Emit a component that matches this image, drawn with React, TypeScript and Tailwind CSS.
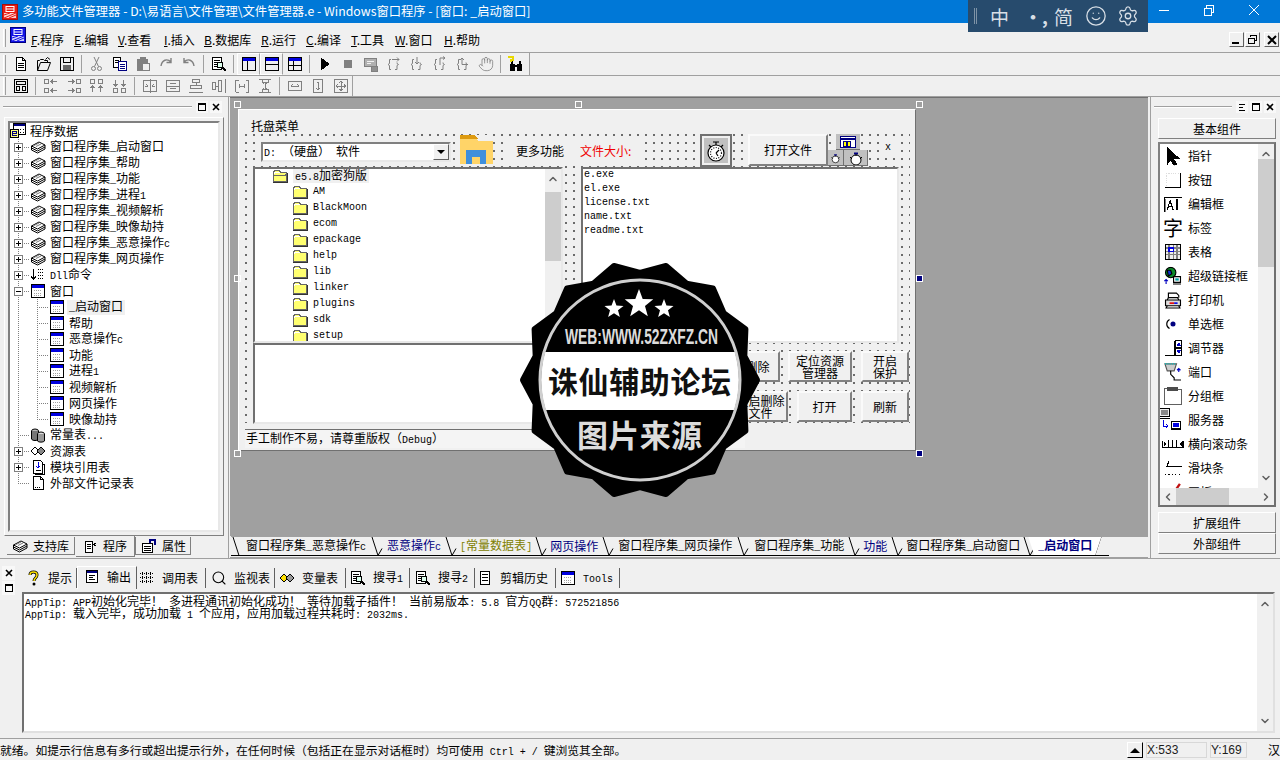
import { ChevronDown, ChevronLeft, ChevronRight, ChevronUp, Hand, Search, Settings, Smile } from "lucide-react";
import type { ReactNode } from "react";

const GRAY = "#808080";
const MONO = "font-['Liberation_Mono',monospace] text-[10px]";

// SimSun style text: latin runs are half width
const T = ({ s }: { s: string }) => (
  <span className="whitespace-pre">
    {s.split(/([\x20-\x7e]+)/).map((part, i) =>
      i % 2 ? (
        <span key={i} className={MONO}>
          {part}
        </span>
      ) : (
        part
      )
    )}
  </span>
);

const Ico = ({ children, gray, w = 16, h = 16, crisp = true }: { children: ReactNode; gray?: boolean; w?: number; h?: number; crisp?: boolean }) => (
  <svg
    width={w}
    height={h}
    viewBox={`0 0 ${w} ${h}`}
    fill="none"
    stroke={gray ? GRAY : "#000"}
    shapeRendering={crisp ? "crispEdges" : "auto"}
    className="shrink-0"
  >
    {children}
  </svg>
);

const WinIcon = ({ dots = true, panes = 0 }: { dots?: boolean; panes?: number }) => (
  <Ico>
    <rect x="1.5" y="1.5" width="13" height="13" fill={panes ? "#f0f0f0" : "#fff"} />
    <rect x="2" y="2" width="12" height="3" fill="#0000e0" stroke="none" />
    {dots && <path d="M4 7.5h8M4 10.5h8M4 12.5h8" stroke="#a0a0a0" strokeDasharray="1 1" />}
    {panes === 1 && <path d="M6.5 5v9" />}
    {panes === 2 && <path d="M2 8.5h12" />}
    {panes === 3 && <path d="M6.5 5v9M2 9.5h12" />}
  </Ico>
);

const StackIcon = () => (
  <Ico crisp={false} h={16}>
    <path d="M1.5 7L9 3l6 3-7.5 4z" fill="#fff" />
    <path d="M4 6.5l5-2.5M6 7.5l5-2.5" stroke="#777" />
    <path d="M1.5 7v2l6 3 7.5-4V6M1.5 9v2l6 3 7.5-4V8" />
  </Ico>
);

const Folder = ({ open }: { open?: boolean }) => (
  <svg width="16" height="14" viewBox="0 0 16 14" className="shrink-0" shapeRendering="crispEdges">
    <path d="M1.5 3.5l1-2h5l1 2h6v9h-13z" fill="#ffff70" stroke="#666" />
    <path d="M2 3h6M2 4h1M14 13h1" stroke="#fff" />
    <path d="M1 13h15M15 4v9" stroke="#333" />
    {open && <path d="M1.5 6.5h11l2-1" stroke="#666" fill="none" />}
  </svg>
);

const BraceIcon = ({ dir }: { dir: number }) => (
  <Ico gray crisp={false}>
    <path d="M5 3.5H3.5v4l-1.5 1 1.5 1v4H5M11 6.5v1l1.5 1-1.5 1v4H9" />
    {dir === 0 && <path d="M6 3.5h7M11 1.5l2 2-2 2" />}
    {dir === 1 && <path d="M8 1v7M6 6l2 2 2-2" />}
    {dir === 2 && <path d="M8 9V2H13M11 .5l2 1.5-2 1.5" />}
    {dir === 3 && <path d="M13 8.5H7V2M9 4L7 2 5 4" />}
  </Ico>
);

const Binoculars = () => (
  <Ico>
    <path d="M2.5 8h4v6h-4zM9.5 8h4v6h-4z" fill="#000" />
    <path d="M6 10h4M4 5v3M12 5v3" strokeWidth="2" />
    <path d="M1 2V1h4v3H3v2" stroke="#e8d800" strokeWidth="1.5" />
  </Ico>
);

const FindDoc = () => (
  <Ico>
    <path d="M1.5 1.5h9v12h-9z" fill="#fff" />
    <path d="M3 4.5h6M3 6.5h4M3 8.5h4M3 10.5h4" />
    <rect x="6.5" y="6.5" width="5" height="5" fill="#dfe" />
    <path d="M11 11l4 4" strokeWidth="2" />
  </Ico>
);

const toolbarA: ReactNode[] = [
  <Ico key="new"><path d="M3.5 1.5h6l3 3v10h-9zM9.5 1.5v3h3M5 7.5h6M5 9.5h6M5 11.5h6" fill="#fff" /></Ico>,
  <Ico key="open" crisp={false}><path d="M1.5 14.5v-10h2l1-1h3l1 1h3v2M1.5 14.5h10l3-8h-10zM9.5 3.5l2-2 2.5 2" /></Ico>,
  <Ico key="save"><path d="M1.5 1.5h13v13h-13zM4.5 1.5v5h7v-5" /><rect x="4" y="9" width="8" height="5" fill="#666" stroke="none" /></Ico>,
  null,
  <Ico key="cut" gray crisp={false}><circle cx="4.5" cy="12.5" r="2" /><circle cx="10.5" cy="12.5" r="2" /><path d="M5.5 10.5L10 1M9.5 10.5L5 1" /></Ico>,
  <Ico key="copy"><path d="M1.5 1.5h7v10h-7z" fill="#fff" /><path d="M3 4.5h4M3 6.5h3" /><path d="M6.5 5.5h8v9h-8z" fill="#fff" stroke="#000080" /><path d="M8 8.5h5M8 10.5h5M8 12.5h5" stroke="#000080" /></Ico>,
  <Ico key="paste" gray><path d="M2.5 3.5h10v11h-10z" fill={GRAY} /><rect x="5" y="1" width="5" height="3" fill={GRAY} /><path d="M7.5 7.5h7v7h-7z" fill="#f0f0f0" /></Ico>,
  <Ico key="redo" gray crisp={false}><path d="M13 6C9 2 4 4 3 10M13 2v4.5H8.5" strokeWidth="1.4" /></Ico>,
  <Ico key="undo" gray crisp={false}><path d="M3 6c4-4 9-2 10 4M3 2v4.5h4.5" strokeWidth="1.4" /></Ico>,
  null,
  <FindDoc key="find" />,
  null,
  <WinIcon key="l1" panes={1} dots={false} />,
  <WinIcon key="l2" panes={2} dots={false} />,
  <WinIcon key="l3" panes={3} dots={false} />,
  null,
  <Ico key="play"><path d="M4 2v12l8-6z" fill="#000" /></Ico>,
  <Ico key="stop" gray><rect x="4" y="4" width="8" height="8" fill={GRAY} stroke="none" /></Ico>,
  <Ico key="dbg" gray><path d="M1.5 2.5h12v8h-12z" fill="#b0b0b0" /><path d="M4 5.5h7M4 7.5h4" stroke="#f0f0f0" /><path d="M8 10h6v5H8z" fill="#909090" /></Ico>,
  <BraceIcon key="b0" dir={0} />,
  <BraceIcon key="b1" dir={1} />,
  <BraceIcon key="b2" dir={2} />,
  <BraceIcon key="b3" dir={3} />,
  <Hand key="hand" size={16} color={GRAY} strokeWidth={1.2} />,
  null,
  <Binoculars key="bino" />,
];

const align = (d: string) => (
  <Ico gray>
    <path d={d} />
  </Ico>
);

const toolbarB: ReactNode[] = [
  <Ico key="frame"><path d="M1.5 1.5h13v13h-13zM3.5 3.5h9v3h-9zM3.5 8.5h3v4h-3zM9.5 8.5h3v4h-3z" /></Ico>,
  null,
  align("M1.5 1.5h4v4h-4zM1.5 10.5h4v4h-4zM14 3.5H8M10 1.5l-2 2 2 2M14 12.5H8M10 10.5l-2 2 2 2"),
  align("M10.5 1.5h4v4h-4zM10.5 10.5h4v4h-4zM2 3.5h6M6 1.5l2 2-2 2M2 12.5h6M6 10.5l2 2-2 2"),
  align("M1.5 1.5h4v4h-4zM9.5 1.5h4v4h-4zM3.5 14V8M1.5 10l2-2 2 2M11.5 14V8M9.5 10l2-2 2 2"),
  align("M1.5 10.5h4v4h-4zM9.5 10.5h4v4h-4zM3.5 2v6M1.5 6l2 2 2-2M11.5 2v6M9.5 6l2 2 2-2"),
  null,
  align("M1.5 2.5h13v11h-13zM8 1v14M3 8h3M4.5 6.5L6 8 4.5 9.5M13 8h-3M11.5 6.5L10 8l1.5 1.5"),
  align("M1.5 2.5h13v11h-13zM1 8h14M5 5.5h6M5 10.5h6"),
  align("M4.5 1.5h7v3h-7zM2.5 7.5h11v3h-11zM1 14.5h14M8 4.5v3"),
  align("M1.5 4.5h3v7h-3zM7.5 2.5h3v11h-3zM14.5 1v14M4.5 8h3"),
  align("M1.5 2v12M14.5 2v12M5.5 8h5M5.5 6v4M10.5 6v4M1.5 2h3M1.5 14h3M14.5 2h-3M14.5 14h-3"),
  align("M2 1.5h12M2 14.5h12M8 4v8M5 1.5v3h6v-3M5 14.5v-3h6v3M6 6l2-2 2 2M6 10l2 2 2-2"),
  null,
  align("M1.5 3.5h13v9h-13zM4 8h8M5.5 6.5L4 8l1.5 1.5M10.5 6.5L12 8l-1.5 1.5"),
  align("M3.5 1.5h9v13h-9zM8 4v8M6.5 5.5L8 4l1.5 1.5M6.5 10.5L8 12l1.5-1.5"),
  align("M1.5 1.5h13v13h-13zM3 8h10M8 3v10M5 6.5L3 8l2 1.5M11 6.5L13 8l-2 1.5M6.5 5L8 3l1.5 2M6.5 11L8 13l1.5-2"),
];

const ToolRow = ({ items, pressed = [] }: { items: ReactNode[]; pressed?: number[] }) => (
  <div className="flex items-center h-full">
    {items.map((item, i) =>
      item === null ? (
        <span key={i} className="w-px h-[18px] bg-[#a0a0a0] mx-[3px]" />
      ) : (
        <span
          key={i}
          className={`w-[23px] h-[22px] flex items-center justify-center ${
            pressed.includes(i) ? "border border-t-white border-l-white border-r-[#a0a0a0] border-b-white" : ""
          }`}
        >
          {item}
        </span>
      )
    )}
  </div>
);

const Grip = () => <span className="w-[3px] h-[18px] border-l border-white border-r border-r-[#a0a0a0] shrink-0" />;

const Logo = ({ blue }: { blue?: boolean }) => (
  <svg width="16" height="16" viewBox="0 0 16 16" className="shrink-0">
    <rect x="0.5" y="0.5" width="15" height="15" fill={blue ? "#1212e6" : "#e81c14"} stroke={blue ? "#000080" : "#a01010"} />
    <rect x="2" y="9" width="12" height="5" fill="#fff" opacity="0.8" />
    <path d="M2 14L14 9M2 11l6-2M7 14l7-3" stroke={blue ? "#1212e6" : "#e81c14"} />
    <rect x="4" y="2.5" width="8" height="5" fill="none" stroke="#fff" />
    <path d="M4 5h8" stroke="#fff" />
  </svg>
);

const WinBtn = ({ children }: { children: ReactNode }) => (
  <span className="w-[15px] h-[15px] flex items-center justify-center bg-[#f0f0f0] border border-t-white border-l-white border-r-[#606060] border-b-[#606060]">
    {children}
  </span>
);

const TitleBar = () => (
  <div className="h-[23px] bg-[#0078d7] text-white flex items-center pl-[2px] relative shrink-0">
    <Logo />
    <span className="ml-[4px] text-[12.3px]">多功能文件管理器 - D:\易语言\文件管理\文件管理器.e - Windows窗口程序 - [窗口: _启动窗口]</span>
    <svg width="116" height="23" viewBox="0 0 116 23" className="absolute right-[7px] top-0" stroke="#fff" fill="none" shapeRendering="crispEdges">
      <path d="M2 10.5h10" />
      <path d="M47.5 8.5h7v7h-7zM49.5 8V5.5h7v7H55" />
      <path d="M92 5l10 10M102 5L92 15" shapeRendering="auto" />
    </svg>
  </div>
);

const ImeBar = () => (
  <div className="absolute left-[968px] top-0 w-[180px] h-[32px] bg-[#274b6d] text-[#d8dfe6] flex items-center z-10">
    <span className="ml-[6px] w-[3px] h-[16px] border-x border-[#7f93a6]" />
    <span className="ml-[13px] text-[19px]">中</span>
    <span className="ml-[15px] text-[18px] font-bold leading-none">•,</span>
    <span className="ml-[6px] text-[19px]">简</span>
    <span className="ml-[12px]">
      <Smile size={22} strokeWidth={1.4} />
    </span>
    <span className="ml-[10px]">
      <Settings size={22} strokeWidth={1.4} />
    </span>
  </div>
);

const menus = [
  ["F", ".程序", "w-[43px]"],
  ["E", ".编辑", "w-[44px]"],
  ["V", ".查看", "w-[46px]"],
  ["I", ".插入", "w-[40px]"],
  ["B", ".数据库", "w-[57px]"],
  ["R", ".运行", "w-[45px]"],
  ["C", ".编译", "w-[45px]"],
  ["T", ".工具", "w-[44px]"],
  ["W", ".窗口", "w-[49px]"],
  ["H", ".帮助", "w-[40px]"],
];

const MenuBar = () => (
  <div className="h-[29px] mt-px border-b border-[#a0a0a0] flex items-center pl-[3px] relative shrink-0">
    <Grip />
    <span className="ml-[4px] -mt-[7px]">
      <Logo blue />
    </span>
    <div className="flex ml-[5px] mt-[3px]">
      {menus.map(([k, rest, w]) => (
        <span key={k} className={`${w} shrink-0`}>
          <span className="underline">{k}</span>
          {rest}
        </span>
      ))}
    </div>
    <div className="absolute right-[1px] top-[8px] flex gap-px">
      <WinBtn><span className="w-[7px] h-[2px] bg-black mt-[7px] mr-[2px]" /></WinBtn>
      <WinBtn>
        <svg width="11" height="11" stroke="#000" fill="none" shapeRendering="crispEdges"><path d="M3.5 3V1.5h6v5H8M1.5 4.5h6v5h-6z" /></svg>
      </WinBtn>
      <span className="w-[2px]" />
      <WinBtn>
        <svg width="10" height="10" stroke="#000" strokeWidth="2"><path d="M1 1l8 8M9 1L1 9" /></svg>
      </WinBtn>
    </div>
  </div>
);

const Toolbars = () => (
  <>
    <div className="h-[23px] border-b border-[#a0a0a0] flex items-center pl-[3px] shrink-0">
      <div className="flex items-center h-full w-[527px] border-r border-[#a0a0a0]">
        <Grip />
        <span className="w-[3px]" />
        <ToolRow items={toolbarA} pressed={[12, 13]} />
      </div>
    </div>
    <div className="h-[21px] border-b border-[#a0a0a0] flex items-center pl-[3px] shrink-0">
      <div className="flex items-center h-full w-[350px] border-r border-[#a0a0a0]">
        <Grip />
        <span className="w-[3px]" />
        <ToolRow items={toolbarB} />
      </div>
    </div>
  </>
);

const PanelHead = ({ extra, line }: { extra?: boolean; line: string }) => (
  <div className="h-[20px] flex items-center pl-[3px] pr-[6px] gap-[2px] shrink-0">
    <span className={`${line} h-[2px] border-t border-[#a0a0a0] border-b border-b-white`} />
    <span className="flex-1" />
    {extra && (
      <span className="w-[12px] h-[12px] bg-[#f8f8f8] flex items-center justify-center">
        <svg width="8" height="7" stroke="#000" shapeRendering="crispEdges"><path d="M1 .5h6M1 3.5h4M1 6.5h6" /></svg>
      </span>
    )}
    <span className="w-[12px] h-[12px] bg-[#f8f8f8] flex items-center justify-center">
      <span className="w-[8px] h-[8px] border border-black border-t-2" />
    </span>
    <span className="w-[12px] h-[12px] bg-[#f8f8f8] flex items-center justify-center">
      <svg width="8" height="8" stroke="#000" strokeWidth="1.6"><path d="M1 1l6 6M7 1L1 7" /></svg>
    </span>
  </div>
);

const Constants = () => (
  <Ico crisp={false}>
    <ellipse cx="5" cy="4" rx="3.5" ry="2" fill="#bbb" />
    <path d="M1.5 4v8c1 2 6 2 7 0V4" fill="#777" />
    <ellipse cx="11" cy="7" rx="3.5" ry="2" fill="#ddd" />
    <path d="M7.5 7v7c1 1.5 6 1.5 7 0V7" fill="#999" />
  </Ico>
);

const Diamonds = () => (
  <Ico crisp={false}>
    <path d="M5 4l4 4-4 4-4-4z" fill="#fff" />
    <path d="M11 4l4 4-4 4-4-4z" fill="#888" />
  </Ico>
);

const ModuleIcon = () => (
  <Ico>
    <path d="M3.5 1.5h7l2 2v11h-9z" fill="#fff" />
    <path d="M13 5.5h1.5v9.5H5" />
    <path d="M8 3v6M6 7l2 2 2-2" stroke="#0000e0" />
    <path d="M5.5 11.5h5" />
  </Ico>
);

const FileIcon = () => (
  <Ico>
    <path d="M3.5 1.5h7l3 3v10h-10zM10.5 1.5v3h3" fill="#fff" />
    <path d="M5 12.5h6" strokeDasharray="1 1" />
  </Ico>
);

const DllIcon = () => (
  <Ico>
    <path d="M3.5 2v10M1 9.5l2.5 3 2.5-3" strokeWidth="1.2" />
    <path d="M8 2.5h6M8 5.5h6M8 8.5h6M8 11.5h6" strokeDasharray="1 1" />
  </Ico>
);

const RootIcon = () => (
  <Ico>
    <rect x="3.5" y="0.5" width="12" height="11" fill="#fff" />
    <rect x="4" y="1" width="11" height="2" fill="#000080" stroke="none" />
    <path d="M10 6h1M13 6h1M10 9h1M13 9h1" />
    <rect x="0.5" y="6.5" width="8" height="8" fill="#ffff80" />
    <path d="M2.5 10.5h4M6.5 10.5v-2h-4v4h4" stroke="#000080" />
  </Ico>
);

type Row = { d: 1 | 2; exp?: "+" | "-"; icon: ReactNode; t: string; sel?: boolean; last?: boolean };

const stack = <StackIcon />;
const win = <WinIcon />;
const rows: Row[] = [
  { d: 1, exp: "+", icon: stack, t: "窗口程序集_启动窗口" },
  { d: 1, exp: "+", icon: stack, t: "窗口程序集_帮助" },
  { d: 1, exp: "+", icon: stack, t: "窗口程序集_功能" },
  { d: 1, exp: "+", icon: stack, t: "窗口程序集_进程1" },
  { d: 1, exp: "+", icon: stack, t: "窗口程序集_视频解析" },
  { d: 1, exp: "+", icon: stack, t: "窗口程序集_映像劫持" },
  { d: 1, exp: "+", icon: stack, t: "窗口程序集_恶意操作c" },
  { d: 1, exp: "+", icon: stack, t: "窗口程序集_网页操作" },
  { d: 1, exp: "+", icon: <DllIcon />, t: "Dll命令" },
  { d: 1, exp: "-", icon: win, t: "窗口" },
  { d: 2, icon: win, t: "_启动窗口", sel: true },
  { d: 2, icon: win, t: "帮助" },
  { d: 2, icon: win, t: "恶意操作c" },
  { d: 2, icon: win, t: "功能" },
  { d: 2, icon: win, t: "进程1" },
  { d: 2, icon: win, t: "视频解析" },
  { d: 2, icon: win, t: "网页操作" },
  { d: 2, icon: win, t: "映像劫持", last: true },
  { d: 1, icon: <Constants />, t: "常量表..." },
  { d: 1, exp: "+", icon: <Diamonds />, t: "资源表" },
  { d: 1, exp: "+", icon: <ModuleIcon />, t: "模块引用表" },
  { d: 1, icon: <FileIcon />, t: "外部文件记录表", last: true },
];

const Gutter = ({ row }: { row: Row }) => {
  const w = row.d === 1 ? 20 : 39;
  return (
    <svg width={w} height="16" viewBox={`0 0 ${w} 16`} className="shrink-0" shapeRendering="crispEdges" fill="none">
      <g stroke="#808080" strokeDasharray="1 1">
        <path d={`M8.5 0V${row.d === 1 && row.last ? 8 : 16}`} />
        {row.d === 1 && <path d="M8 8.5H20" />}
        {row.d === 2 && <path d={`M27.5 0V${row.last ? 8 : 16}M27 8.5H39`} />}
      </g>
      {row.exp && (
        <>
          <rect x="4.5" y="4.5" width="8" height="8" fill="#fff" stroke="#808080" />
          <path d={row.exp === "+" ? "M6 8.5h5M8.5 6v5" : "M6 8.5h5"} stroke="#000" />
        </>
      )}
    </svg>
  );
};

const LeftPanel = () => (
  <div className="w-[229px] shrink-0 flex flex-col border-r border-[#a0a0a0]">
    <PanelHead line="w-[190px]" />
    <div className="mx-[4px] h-[419px] border border-white border-r-[#808080] border-b-[#808080] p-[3px]">
      <div className="h-full w-full bg-white border-2 border-t-[#808080] border-l-[#808080] border-r-[#e8e8e8] border-b-[#e8e8e8] overflow-hidden">
        <div className="flex items-center h-4">
          <RootIcon />
          <span className="ml-[4px]">程序数据</span>
        </div>
        {rows.map((r) => (
          <div key={r.t} className="flex items-center h-4">
            <Gutter row={r} />
            {r.icon}
            <span className={`ml-[2px] px-[2px] h-[15px] flex items-center ${r.sel ? "bg-[#f0f0f0]" : ""}`}>
              <T s={r.t} />
            </span>
          </div>
        ))}
      </div>
    </div>
    <div className="flex items-start pl-[7px] h-[22px]">
      <div className="w-[68px] h-[18px] mt-[1px] flex items-center gap-[5px] pl-[5px] border-r border-b border-[#808080]">
        <StackIcon />
        支持库
      </div>
      <div className="w-[59px] h-[21px] flex items-center gap-[5px] pl-[6px] bg-[#f0f0f0] border-b border-r border-[#808080] ml-px">
        <Ico><path d="M3.5 3.5h7v11h-7zM5 6.5h4M5 8.5h4M5 10.5h4" fill="#fff" /><path d="M14 5l-2 1.5 2 1.5" /></Ico>
        程序
      </div>
      <div className="w-[56px] h-[18px] mt-[1px] flex items-center gap-[5px] pl-[5px] border-r border-b border-l border-[#808080]">
        <Ico><path d="M1.5 5.5h10v9h-10zM3 8.5h7M3 10.5h7M3 12.5h7" fill="#fff" /><path d="M9 5V2h5v5" stroke="#000080" strokeWidth="2" /></Ico>
        属性
      </div>
    </div>
  </div>
);

const Raised = ({ className, children }: { className: string; children: ReactNode }) => (
  <div
    className={`absolute flex items-center justify-center text-center leading-[12px] bg-[#f0f0f0] border-2 border-t-[#fafafa] border-l-[#fafafa] border-r-[#808080] border-b-[#808080] ${className}`}
  >
    <span>{children}</span>
  </div>
);

const Scroll = ({ className, thumb }: { className: string; thumb: string }) => (
  <div className={`relative bg-[#f0f0f0] flex flex-col items-center justify-between py-[4px] ${className}`}>
    <ChevronUp size={12} strokeWidth={3} color="#606060" />
    <div className={`absolute left-0 right-0 bg-[#cdcdcd] ${thumb}`} />
    <ChevronDown size={12} strokeWidth={3} color="#606060" />
  </div>
);

const Handle = ({ className, navy }: { className: string; navy?: boolean }) => (
  <span className={`absolute w-[7px] h-[7px] border border-white ${navy ? "bg-[#000080]" : ""} ${className}`} />
);

const WinFolder = () => (
  <svg width="33" height="29" viewBox="0 0 33 29" shapeRendering="crispEdges">
    <path d="M0 2h15l3 4h15v23H0z" fill="#ffd468" />
    <path d="M0 0h15l3 4H0z" fill="#dd9a10" />
    <path d="M6 15h20v14h-6v-7h-8v7H6z" fill="#3f8fdc" />
  </svg>
);

const Stopwatch = () => (
  <svg width="24" height="24" viewBox="0 0 24 24" fill="none" stroke="#000" strokeWidth="1.2">
    <circle cx="12" cy="14" r="8" fill="#fff" />
    <circle cx="12" cy="14" r="5.5" strokeDasharray="1 1.5" />
    <path d="M12 14l3-3M12 14l2 3M9 3h6M12 3v3M5 6l2 2M19 6l-2 2" />
  </svg>
);

const Bell = () => (
  <svg width="22" height="14" viewBox="0 0 22 14" fill="none" stroke="#000">
    <circle cx="11" cy="9" r="5" fill="#fff" />
    <path d="M9 2.5h4" stroke="#000080" strokeWidth="2" />
    <path d="M11 3v2M5 6l2 2M17 6l-2 2" />
  </svg>
);

const treeFiles = ["AM", "BlackMoon", "ecom", "epackage", "help", "lib", "linker", "plugins", "sdk", "setup"];
const listFiles = ["e.exe", "el.exe", "license.txt", "name.txt", "readme.txt"];

const Form = () => (
  <div className="absolute left-[8px] top-[11px] w-[678px] h-[342px] bg-[#f0f0f0] border border-t-white border-l-white border-r-[#707070] border-b-[#707070]">
    <div className="absolute left-[12px] top-[10px]">托盘菜单</div>
    <div className="absolute left-[6px] top-[24px] w-[665px] h-[289px] bg-[radial-gradient(circle_at_1px_1px,#000_0.55px,transparent_0.9px)] bg-[length:8px_8px]" />
    {/* combo */}
    <div className="absolute left-[22px] top-[32px] w-[190px] h-[20px] bg-white border-2 border-t-[#808080] border-l-[#808080] border-r-[#e8e8e8] border-b-[#e8e8e8] flex items-center">
      <span className="pl-px flex-1"><T s="D: （硬盘） 软件" /></span>
      <span className="w-[16px] h-[16px] bg-[#f0f0f0] border border-r-[#606060] border-b-[#606060] border-t-white border-l-white flex items-center justify-center">
        <span className="w-0 h-0 border-x-4 border-x-transparent border-t-4 border-t-black" />
      </span>
    </div>
    <div className="absolute left-[221px] top-[25px] bg-[#f0f0f0]">
      <WinFolder />
    </div>
    <div className="absolute left-[265px] top-[26px] w-[72px] h-[29px] bg-[#f0f0f0] flex items-center justify-center">更多功能</div>
    <div className="absolute left-[337px] top-[26px] w-[68px] h-[29px] bg-[#f0f0f0] flex items-center pl-[4px] text-[#f00000]">文件大小:</div>
    <div className="absolute left-[461px] top-[24px] w-[32px] h-[33px] bg-[#f0f0f0] border-2 border-[#707070] p-[2px]">
      <div className="w-full h-full bg-[#c0c0c0] flex items-center justify-center">
        <Stopwatch />
      </div>
    </div>
    <Raised className="left-[509px] top-[24px] w-[80px] h-[32px]">打开文件</Raised>
    <div className="absolute left-[597px] top-[24px] w-[24px] h-[16px] bg-[#c0c0c0] border-b border-[#707070] flex items-center justify-center">
      <svg width="16" height="12" shapeRendering="crispEdges"><rect x=".5" y=".5" width="15" height="11" fill="#fff" stroke="#000080" /><path d="M1 2.5h14" stroke="#000080" strokeWidth="2" /><rect x="3" y="5" width="3" height="5" fill="#ff0" stroke="#000080" /><rect x="7" y="5" width="3" height="5" fill="#ff0" stroke="#000080" /></svg>
    </div>
    <div className="absolute left-[589px] top-[40px] w-[16px] h-[16px] bg-[#c0c0c0] border-r border-b border-[#707070] overflow-hidden flex items-end justify-center">
      <Bell />
    </div>
    <div className="absolute left-[605px] top-[40px] w-[24px] h-[16px] bg-[#c0c0c0] border-r border-b border-[#707070] flex items-end justify-center">
      <Bell />
    </div>
    <div className={`absolute left-[642px] top-[31px] w-[14px] h-[14px] bg-[#f0f0f0] flex items-center justify-center ${MONO}`}>x</div>

    {/* drive tree */}
    <div className="absolute left-[14px] top-[57px] w-[310px] h-[176px] bg-white border-2 border-t-[#707070] border-l-[#707070] border-r-[#e8e8e8] border-b-[#e8e8e8] overflow-hidden flex">
      <div className="flex-1 pl-[17px] overflow-hidden">
        <div className="flex items-center h-4 -mt-px">
          <Folder open />
          <span className="ml-[5px] px-[2px] bg-[#f0f0f0]"><T s="e5.8加密狗版" /></span>
        </div>
        {treeFiles.map((f) => (
          <div key={f} className="flex items-center h-4 pl-[20px]">
            <Folder />
            <span className={`ml-[5px] ${MONO}`}>{f}</span>
          </div>
        ))}
      </div>
      <Scroll className="w-[16px]" thumb="top-[23px] h-[69px]" />
    </div>
    {/* file list */}
    <div className="absolute left-[342px] top-[57px] w-[318px] h-[176px] bg-white border-2 border-t-[#707070] border-l-[#707070] border-r-[#e8e8e8] border-b-[#e8e8e8] pl-px">
      <div className="-mt-px">
        {listFiles.map((f) => (
          <div key={f} className={`h-[14px] flex items-center ${MONO}`}>{f}</div>
        ))}
      </div>
    </div>
    <div className="absolute left-[14px] top-[233px] w-[310px] h-[81px] bg-white border-2 border-t-[#707070] border-l-[#707070] border-r-[#e8e8e8] border-b-[#e8e8e8]" />

    <Raised className="left-[496px] top-[241px] w-[45px] h-[31px]">删除</Raised>
    <Raised className="left-[549px] top-[241px] w-[64px] h-[31px]">定位资源<br />管理器</Raised>
    <Raised className="left-[622px] top-[241px] w-[48px] h-[31px]">开启<br />保护</Raised>
    <Raised className="left-[494px] top-[281px] w-[55px] h-[31px]">重启删除<br />文件</Raised>
    <Raised className="left-[558px] top-[281px] w-[55px] h-[31px]">打开</Raised>
    <Raised className="left-[622px] top-[281px] w-[48px] h-[31px]">刷新</Raised>

    <div className="absolute left-[6px] top-[319px] w-[500px] h-[19px] border-t border-[#707070] flex items-center pl-px bg-[#f4f4f4]">
      <T s="手工制作不易，请尊重版权（Debug）" />
    </div>
  </div>
);

const Designer = () => (
  <div className="relative flex-1 bg-[#a0a0a0] border-t border-[#707070] overflow-hidden">
    <Form />
    <Handle className="left-[4px] top-[3px]" />
    <Handle className="left-[345px] top-[3px]" />
    <Handle className="left-[686px] top-[3px]" />
    <Handle className="left-[4px] top-[177px]" />
    <Handle className="left-[686px] top-[177px]" navy />
    <Handle className="left-[4px] top-[352px]" />
    <Handle className="left-[345px] top-[352px]" navy />
    <Handle className="left-[686px] top-[352px]" navy />
  </div>
);

const tabs: [string, string, string][] = [
  ["窗口程序集_恶意操作c", "text-black", "w-[21px]"],
  ["恶意操作c", "text-[#000080]", "w-[19px]"],
  ["[常量数据表]", "text-[#808000]", "w-[18px]"],
  ["网页操作", "text-[#000080]", "w-[20px]"],
  ["窗口程序集_网页操作", "text-black", "w-[22px]"],
  ["窗口程序集_功能", "text-black", "w-[19px]"],
  ["功能", "text-[#000080]", "w-[19px]"],
  ["窗口程序集_启动窗口", "text-black", "w-[18px]"],
];

const TabSep = ({ w }: { w: string }) => (
  <span className={`${w} h-[19px] flex justify-center shrink-0`}>
    <svg width="18" height="19" viewBox="0 0 18 19" fill="none" stroke="#000">
      <path d="M4 0l6 18.5M10 18.5l4-7" />
    </svg>
  </span>
);

const TabStrip = () => (
  <div className="h-[22px] pl-[1px] shrink-0 flex border-b border-[#a0a0a0]">
    <div className="h-[20px] border-t border-[#a0a0a0] flex items-center w-full">
      <span className="flex items-center h-full w-[878px] border-b border-black relative">
        <span className="w-[15px] h-[19px] shrink-0">
          <svg width="15" height="19" fill="none" stroke="#000"><path d="M2 0l6 18.5" /></svg>
        </span>
        {tabs.map(([t, c, w]) => (
          <span key={t} className="flex items-center shrink-0">
            <span className={c}><T s={t} /></span>
            <TabSep w={w} />
          </span>
        ))}
        <span className="relative -ml-[10px] pl-[10px] pr-[9px] h-full flex items-center bg-white font-bold text-[#000080] shrink-0 [clip-path:polygon(0_0,100%_0,calc(100%-6px)_100%,6px_100%)]">
          <T s="_启动窗口" />
        </span>
        <svg width="14" height="19" fill="none" stroke="#000" className="-ml-[7px] shrink-0"><path d="M7 0L1 18" /></svg>
      </span>
    </div>
  </div>
);

const RightIconMap: [string, ReactNode][] = [
  ["指针", <Ico key="p"><path d="M3 1v14l3-4 3 5 2-1-3-5h5z" fill="#000" /></Ico>],
  ["按钮", <Ico key="b"><path d="M14.5 2v12.5H1" /><path d="M2 2h12M2 2v11" stroke="#ddd" strokeDasharray="1 1" /></Ico>],
  ["编辑框", <Ico key="e"><path d="M.5 15V2.5H16" /><path d="M1.5 15V3.5" stroke="#808080" /><path d="M3 13l2.5-8L8 13M4 10h3M11.5 4v9" /></Ico>],
  ["标签", <span key="l" className="w-4 flex justify-center text-[20px] leading-none">字</span>],
  ["表格", <Ico key="t"><rect x="1.5" y="1.5" width="13" height="13" fill="#eee" /><path d="M1.5 4.5h13M1.5 7.5h13M1.5 10.5h13M4.5 2v12M8.5 2v12M11.5 2v12" stroke="#808080" /><rect x="4.5" y="4.5" width="4" height="3" fill="#fff" stroke="#0000e0" /></Ico>],
  ["超级链接框", <Ico key="h" crisp={false}><circle cx="6" cy="5" r="4.5" fill="#0a8c2a" /><path d="M3 3h3l1 3-3 2z" fill="#1030d0" /><path d="M8.5 8.5h6v5h-6z" fill="#fff" /><rect x="10" y="10" width="3" height="2" fill="#00a0a0" stroke="none" /><path d="M8 15h7" /><path d="M2 15v-4M.5 12.5L2 11l1.5 1.5" stroke="#0000c0" /></Ico>],
  ["打印机", <Ico key="pr" crisp={false}><path d="M4 6V2h7l2 2v2" fill="#fff" /><path d="M1.5 8h13v5h-13z" fill="#ddd" /><path d="M3 8l1-2h8l1 2M3 13l-1 2h12l-1-2" /><rect x="5" y="10" width="4" height="1.5" fill="#e01010" stroke="none" /><rect x="9" y="10" width="3" height="1.5" fill="#1010e0" stroke="none" /></Ico>],
  ["单选框", <Ico key="r" crisp={false}><path d="M5 4a4.5 4.5 0 0 0 0 8" /><circle cx="8" cy="8" r="2.2" fill="#000080" stroke="none" /></Ico>],
  ["调节器", <Ico key="s"><path d="M1 14.5h8.500V1.500" /><path d="M10.5 1.5h5v13h-5zM11 8h4" /><path d="M13 3l2 3h-4zM13 13l2-3h-4z" fill="#0000c0" stroke="none" /></Ico>],
  ["端口", <Ico key="po" crisp={false}><path d="M1 1h10l-2 6H3z" fill="#ccc" stroke="#555" /><path d="M1 1h10" stroke="#0cc" strokeDasharray="1 1" /><path d="M6 7v3l3 3v2h6" /><path d="M13 8V5M11.5 6.5L13 5l1.5 1.5" stroke="#0000c0" /></Ico>],
  ["分组框", <Ico key="g"><path d="M.5 2V15.5H15.5V2H12M.5 1.5H3" stroke="#606060" /><rect x="3" y="0" width="9" height="4" fill="#000" stroke="none" opacity=".7" /></Ico>],
  ["服务器", <span key="sv" className="-ml-[6px] -mt-[3px]"><Ico w={22} h={22}><path d="M.5 .5h10v8h-10z" fill="#eee" /><rect x="2" y="2" width="7" height="5" fill="#888" stroke="none" /><path d="M1 10.5h10" /><path d="M4 12v6h5M7 16l2 2-2 2" stroke="#0000e0" /><rect x="12.5" y="13.5" width="9" height="7" fill="#fff" /><rect x="14" y="15" width="6" height="4" fill="#0000e0" stroke="none" /><path d="M12 21.5h10" /></Ico></span>],
  ["横向滚动条", <span key="hs" className="-ml-[3px]"><Ico w={22} h={16}><path d="M.5 4.5V11.5h21V4.5" /><path d="M4 8L2 6v4zM18 8l2-2v4z" fill="#000" /><path d="M6.5 4v7.5M10.5 4v7.5M14.5 4v7.5" /></Ico></span>],
  ["滑块条", <Ico key="sl"><path d="M2 6.5h14M4.5 2L2.5 7" /><path d="M1 13.5h15" strokeDasharray="1 2" /></Ico>],
  ["画板", <Ico key="ca" crisp={false}><path d="M1 6h7M1 6v9M15 6v9" /><path d="M14 1l-5 7" stroke="#c01010" strokeWidth="2" /></Ico>],
];

const RightBtn = ({ children }: { children: ReactNode }) => (
  <div className="h-[21px] border border-t-white border-l-white border-r-[#808080] border-b-[#808080] flex items-center justify-center shrink-0">
    {children}
  </div>
);

const RightPanel = () => (
  <div className="flex-1 flex flex-col border-l border-[#a0a0a0] ml-[2px]">
    <PanelHead extra line="w-[78px]" />
    <div className="ml-[7px] mr-[6px] pt-px flex flex-col">
      <RightBtn>基本组件</RightBtn>
      <div className="mt-[3px] h-[365px] border-2 border-t-[#808080] border-l-[#808080] border-r-[#707070] border-b-[#707070] bg-[#f0f0f0] relative">
        <div className="flex h-[344px]">
          <div className="w-[98px] bg-white overflow-hidden">
            {RightIconMap.map(([t, icon]) => (
              <div key={t} className="h-6 flex items-center pl-[5px]">
                <span className="w-[23px] shrink-0 flex items-center [&>svg]:scale-[1.15]">{icon}</span>
                {t}
              </div>
            ))}
          </div>
          <Scroll className="flex-1" thumb="top-[15px] h-[108px]" />
        </div>
        <div className="h-[17px] relative flex items-center justify-between px-[2px]">
          <ChevronLeft size={12} strokeWidth={3} color="#606060" />
          <div className="absolute left-[16px] w-[53px] top-0 bottom-0 bg-[#cdcdcd]" />
          <ChevronRight size={12} strokeWidth={3} color="#606060" />
        </div>
      </div>
      <div className="mt-[5px] flex flex-col">
        <RightBtn>扩展组件</RightBtn>
        <RightBtn>外部组件</RightBtn>
      </div>
    </div>
  </div>
);

const bottomTabs: [string, ReactNode, string, boolean][] = [
  ["提示", <Ico key="a" crisp={false}><path d="M5 5c0-4 7-4 7 0 0 3-3 3-3 6" stroke="#000" strokeWidth="3" /><path d="M5 5c0-4 7-4 7 0 0 3-3 3-3 6" stroke="#ffe000" strokeWidth="1.5" /><circle cx="9" cy="14" r="1.5" fill="#000" stroke="none" /></Ico>, "w-[56px] pl-[4px]", false],
  ["输出", <Ico key="b"><path d="M2.5 1.5h11v12h-11z" fill="#fff" /><path d="M3 2.5h10" stroke="#000080" strokeWidth="2" /><path d="M5 6.5h6M5 8.5h4M5 10.5h6" /></Ico>, "w-[60px] pl-[6px]", true],
  ["调用表", <Ico key="c"><path d="M1 3.5h14M1 7.5h14M1 11.5h14M3.5 2v12M7.5 2v12M11.5 2v12" strokeDasharray="1 1" /></Ico>, "w-[69px] pl-[2px]", false],
  ["监视表", <Search key="d" size={16} strokeWidth={1.6} className="shrink-0" />, "w-[69px] pl-[5px]", false],
  ["变量表", <Ico key="e" crisp={false}><path d="M5 4l4 4-4 4-4-4z" fill="#ffe000" /><path d="M11 4l4 4-4 4-4-4z" fill="#999" /></Ico>, "w-[71px] pl-[4px]", false],
  ["搜寻1", <FindDoc key="f" />, "w-[64px] pl-[4px]", false],
  ["搜寻2", <FindDoc key="g" />, "w-[65px] pl-[5px]", false],
  ["剪辑历史", <Ico key="h"><path d="M3.5 1.5h9v13h-9zM5 4.5h6M5 7.5h6M5 10.5h6" fill="#fff" /></Ico>, "w-[81px] pl-[2px]", false],
  ["Tools", <WinIcon key="i" />, "w-[64px] pl-[4px]", false],
];

const BottomPanel = () => (
  <div className="h-[180px] shrink-0 flex border-t border-[#a0a0a0] relative">
    <div className="w-[21px] shrink-0 pt-[7px] pl-[2px] flex flex-col gap-px">
      <span className="w-[13px] h-[14px] bg-[#f8f8f8] flex items-center justify-center">
        <svg width="8" height="8" stroke="#000" strokeWidth="1.6"><path d="M1 1l6 6M7 1L1 7" /></svg>
      </span>
      <span className="w-[13px] h-[14px] bg-[#f8f8f8] flex items-center justify-center">
        <span className="w-[8px] h-[8px] border border-black border-t-2" />
      </span>
    </div>
    <div className="flex-1 flex flex-col pt-[9px] pb-[5px] pr-[5px]">
      <div className="flex h-[20px] items-start shrink-0 mb-[4px]">
        {bottomTabs.map(([t, icon, cls, active]) => (
          <div
            key={t}
            className={`${cls} flex items-center gap-[7px] border-r border-[#606060] ${
              active ? "h-[23px] -mt-[2px] border-t border-l border-t-white border-l-white pb-[2px]" : "h-[20px]"
            }`}
          >
            {icon}
            <T s={t} />
          </div>
        ))}
      </div>
      <div className="flex-1 ml-px bg-white border-2 border-t-[#707070] border-l-[#707070] border-r-[#e0e0e0] border-b-[#e0e0e0] flex min-h-0">
        <div className="flex-1 pl-px pt-[2px]">
          <div className="h-[12px] flex items-center"><T s="AppTip: APP初始化完毕！ 多进程通讯初始化成功！ 等待加载子插件！ 当前易版本: 5.8 官方QQ群: 572521856" /></div>
          <div className="h-[12px] flex items-center"><T s="AppTip: 载入完毕，成功加载 1 个应用，应用加载过程共耗时: 2032ms." /></div>
        </div>
        <Scroll className="w-[16px]" thumb="hidden" />
      </div>
    </div>
  </div>
);

const StatusBar = () => (
  <div className="flex-1 border-t border-[#a0a0a0] flex items-center pt-[3px] relative overflow-hidden">
    <span className="whitespace-pre text-[11.8px]">
      <T s="就绪。如提示行信息有多行或超出提示行外，在任何时候（包括正在显示对话框时）均可使用 Ctrl + / 键浏览其全部。" />
    </span>
    <div className="absolute left-[1127px] top-[3px] flex items-center h-[16px]">
      <span className="w-[16px] h-[16px] border border-t-white border-l-white border-r-black border-b-black flex items-center justify-center">
        <span className="w-0 h-0 border-x-[5px] border-x-transparent border-b-[5px] border-b-black" />
      </span>
      <span className="ml-[3px] w-[61px] h-[16px] border border-[#d8d8d8] flex items-center text-[12px] font-['Liberation_Sans',sans-serif] text-[#1c1c1c]">X:533</span>
      <span className="ml-[3px] w-[37px] h-[16px] border border-[#d8d8d8] flex items-center text-[12px] font-['Liberation_Sans',sans-serif] text-[#1c1c1c]">Y:169</span>
      <span className="ml-[3px] w-[30px] h-[16px] flex items-center justify-end">汉</span>
    </div>
  </div>
);

const star = (cx: number, cy: number, r: number) =>
  Array.from({ length: 10 }, (_, i) => {
    const a = -Math.PI / 2 + (i * Math.PI) / 5;
    const rad = i % 2 ? r * 0.42 : r;
    return `${cx + rad * Math.cos(a)},${cy + rad * Math.sin(a)}`;
  }).join(" ");

const sealEdge = Array.from({ length: 28 }, (_, i) => {
  const a = (i * Math.PI) / 14;
  const rad = i % 2 ? 107 : 117;
  return `${130 + rad * Math.cos(a)},${125 + rad * Math.sin(a)}`;
}).join(" ");

const Seal = () => (
  <svg width="260" height="250" viewBox="0 0 260 250" className="absolute left-[510px] top-[255px] z-20" fontFamily="'Noto Sans CJK SC',sans-serif">
    <defs>
      <clipPath id="seal-disc">
        <circle cx="130" cy="125" r="99" />
      </clipPath>
    </defs>
    <polygon points={sealEdge} fill="#000" stroke="#000" strokeWidth="6" strokeLinejoin="round" />
    <rect x="20" y="97" width="220" height="58" fill="#fff" clipPath="url(#seal-disc)" />
    <circle cx="130" cy="125" r="100" fill="none" stroke="#cfcfcf" strokeWidth="3" />
    <polygon points={star(104, 54, 10)} fill="#fff" />
    <polygon points={star(129, 49, 15)} fill="#fff" />
    <polygon points={star(154, 54, 10)} fill="#fff" />
    <text x="55" y="89" fontFamily="'Liberation Sans',sans-serif" fontWeight="700" fontSize="22" fill="#dcdcdc" textLength="153" lengthAdjust="spacingAndGlyphs">WEB:WWW.52ZXFZ.CN</text>
    <text x="38" y="138" fontWeight="700" fontSize="30" fill="#111" textLength="183">诛仙辅助论坛</text>
    <text x="67" y="192" fontWeight="700" fontSize="31" fill="#dcdcdc" textLength="125">图片来源</text>
  </svg>
);

export default function App() {
  return (
    <div className="relative w-[1280px] h-[760px] overflow-hidden bg-[#f0f0f0] text-black flex flex-col font-['Noto_Sans_CJK_SC',sans-serif] text-[12px] leading-none">
      <TitleBar />
      <ImeBar />
      <MenuBar />
      <Toolbars />
      <div className="h-[461px] flex shrink-0">
        <LeftPanel />
        <div className="w-[918px] ml-px flex flex-col shrink-0">
          <Designer />
          <TabStrip />
        </div>
        <RightPanel />
      </div>
      <BottomPanel />
      <StatusBar />
      <Seal />
    </div>
  );
}
